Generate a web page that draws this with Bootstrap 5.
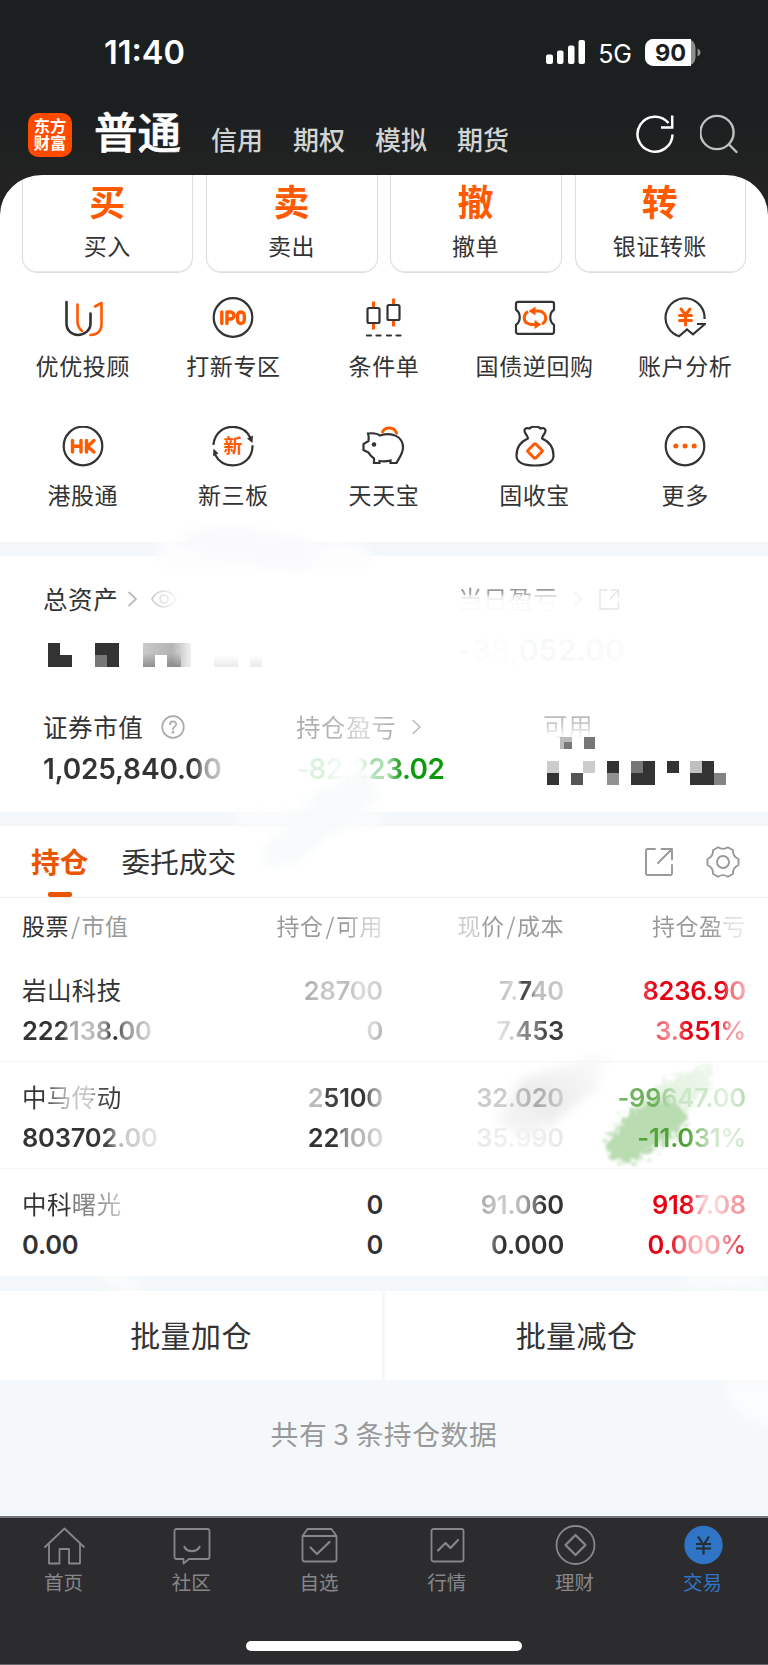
<!DOCTYPE html>
<html lang="zh-CN">
<head>
<meta charset="utf-8">
<meta name="viewport" content="width=device-width, initial-scale=1">
<title>交易</title>
<link href="https://cdn.jsdelivr.net/npm/bootstrap@5.3.0/dist/css/bootstrap.min.css" rel="stylesheet">
<style>
body{font-family:"Noto Sans CJK SC",sans-serif;color:#333;background:#f4f8fa;width:768px;overflow-x:hidden}
svg{display:block;flex:none;fill:none;stroke-linecap:round;stroke-linejoin:round}
.latin{font-family:Inter,"Noto Sans CJK SC",sans-serif}
.app-head{height:175px;background:linear-gradient(#1b1f20 60%,#222)}
.status{height:103px;padding:3px 67px 0 104px}
.clock{font-size:32.5px;font-weight:600;letter-spacing:0}
.net{font-size:25px;margin:3px 13px 0 12px}
.titlebar{height:46px;padding:0 29px 0 28px}
.logo{width:44px;height:44px;border-radius:10px;background:#ff4a00;font:700 16.3px/17.5px "Noto Sans CJK SC",sans-serif;padding-top:4px;margin-top:1px}
.title-main{font-size:43.5px;font-weight:500;line-height:46px;margin:-6px 0 0 22px;-webkit-text-stroke:.7px #fff}
.title-sub{font-size:26px;font-weight:500;line-height:30px;color:#d2d3d3;margin-left:30px;margin-top:10px}
.dark{background:#222}
.sheet{height:367px;border-radius:42px 42px 0 0 / 40px 40px 0 0;overflow:hidden}
.trade-row{display:grid;grid-template-columns:repeat(4,1fr);gap:12.7px;padding:0 22px}
.trade{height:98px;border:1.5px solid #dedede;border-top:0;border-radius:0 0 15px 15px;box-shadow:0 -1px 0 #e6e6e6 inset}
.trade b{font-size:36px;line-height:40px;color:#ff5a00;height:40px;margin:5px 1px 0 0;font-weight:700}
.trade span{font-size:23px;line-height:30px;margin:10px 1px 0 0;letter-spacing:.5px}
.quick{display:grid;grid-template-columns:repeat(5,150.6px);padding:24px 7.5px 0;row-gap:46px}
.quick span{font-size:23px;line-height:30px;margin:13px 0 0;letter-spacing:.6px;white-space:nowrap}
.k{stroke:#333;stroke-width:2.2}
.o{stroke:#ff5a00;stroke-width:3}
.o-bold{stroke-width:3.4}
.gap-band{height:14px;background:#f3f7f9}
.assets{height:256px;padding:28px 0 0 43px}
.lbl{font-size:24.5px;line-height:28px;height:30px;white-space:nowrap;letter-spacing:.6px}
.top-grid{display:grid;grid-template-columns:415px 1fr}
.low-grid{display:grid;grid-template-columns:253px 247px 1fr;margin-top:45px}
.money{font-size:28px;font-weight:560;line-height:36px;height:34px;margin-top:9px;letter-spacing:-.15px}
.tabs{height:72px;border-bottom:1.5px solid #f0f0f0;padding:0 28px 0 31px}
.tab{font-size:28.7px;line-height:70px;height:72px;position:relative}
.tab.on{color:#ea5504;font-weight:700;margin-right:33px}
.tab.on::after{content:"";position:absolute;left:17px;top:66px;width:24px;height:5px;border-radius:2px;background:#ea5504}
.line-grid{display:grid;grid-template-columns:200px 161px 181px 182px;padding:0 22px}
.heads{height:57px;line-height:55px;font-size:23px;color:#999;letter-spacing:.5px;white-space:nowrap}
.slash{margin:0 1px 0 2px}
.hold{height:107px;padding-top:16px;border-bottom:1.5px solid #f5f5f5;line-height:40px;font-size:25.5px;font-weight:560;letter-spacing:-.2px}
.hold .nm{font:400 24.5px/38px "Noto Sans CJK SC",sans-serif;height:40px;letter-spacing:.4px}
.hold:last-child{border-bottom-color:transparent}
.ink{display:inline-block;color:transparent;background-clip:text;-webkit-background-clip:text;background-image:var(--g)}
.g-total{--g:linear-gradient(90deg,#333 85%,#888 89%,#a8a8a8 92%,#ccc)}
.g-pl{--g:linear-gradient(90deg,#f0f9f0,#d8f0da 15%,#f4fbf4 28%,#fafdfa 42%,#a5dba9 52%,#b5e0b9 62%,#45b045 67%,#0a9a0a 72%)}
.g-lab{--g:linear-gradient(90deg,#aaa,#bbb 45%,#ddd 65%,#aaa)}
.g-day{--g:linear-gradient(180deg,#999 20%,#aaa 32%,#e8e8e8 42%,#fafafa 62%)}
.g-dayv{--g:linear-gradient(90deg,#fafafa,#fdfdfd 25%,#f4faf5 50%,#f9f9f9 60%,#f8f8f8 72%,#fbfbfb)}
.g-use{--g:linear-gradient(180deg,#bbb 20%,#d4d4d4 60%,#f1f1f1 80%)}
.g-h2{--g:linear-gradient(90deg,#999 65%,#aaa 70%,#ccc 82%,#ddd)}
.g-h3{--g:linear-gradient(90deg,#ccc,#ccc 18%,#999 28%)}
.g-h4{--g:linear-gradient(90deg,#999 60%,#aaa 74%,#ddd 80%,#e8e8e8)}
.g-m1{--g:linear-gradient(90deg,#333 28%,#444 32%,#999 36%,#c8c8c8 50%,#999 64%,#333 69%,#333 73%,#888 78%,#ddd)}
.g-q1{--g:linear-gradient(90deg,#aaa,#ccc 30%,#bbb 55%,#ddd 70%,#ccc)}
.g-z1{--g:linear-gradient(110deg,#d8d8d8 40%,#999)}
.g-p1{--g:linear-gradient(90deg,#bbb,#ddd 28%,#444 36%,#555 48%,#bbb 56%,#ccc)}
.g-c1{--g:linear-gradient(90deg,#e8e8e8,#ccc 26%,#888 40%,#777 60%,#333 78%,#444)}
.g-r1{--g:linear-gradient(90deg,#ee4550,#e60012 14%,#e60012 78%,#f06a73 84%,#f7b0b5)}
.g-r2{--g:linear-gradient(90deg,#f04b55,#f59098 16%,#f26a72 24%,#e60012 36%,#e60012 71%,#f48b93 80%,#f7b7bb)}
.g-n2{--g:linear-gradient(90deg,#333 22%,#666 29%,#bbb 46%,#ccc 68%,#555 75%,#333)}
.g-m2{--g:linear-gradient(90deg,#333 53%,#444 62%,#888 68%,#ccc 75%,#ccc 82%,#e8e8e8)}
.g-q2{--g:linear-gradient(90deg,#bbb 18%,#444 24%,#333 75%,#888 85%,#ccc)}
.g-z2{--g:linear-gradient(90deg,#333 38%,#666 45%,#aaa 55%,#bbb 75%,#ddd)}
.g-p2{--g:linear-gradient(90deg,#ccc,#ccc 40%,#aaa 70%,#d0d0d0)}
.g-c2{--g:linear-gradient(90deg,#e8e8e8,#f3f3f3 50%,#e8e8e8)}
.g-d2{--g:linear-gradient(90deg,#79b86b,#66ae55 30%,#a0cf97 36%,#cce7c7 48%,#cce7c7 70%,#e2f2df 85%,#b5dab0)}
.g-e2{--g:linear-gradient(90deg,#55a540,#4ba030 45%,#76b665 52%,#badbb3 64%,#e2f1df 80%,#cae4c6)}
.g-n3{--g:linear-gradient(90deg,#333 45%,#888 54%,#888 70%,#999 80%,#ccc)}
.g-p3{--g:linear-gradient(90deg,#aaa,#ccc 25%,#bbb 45%,#888 61%,#333 76%)}
.g-c3{--g:linear-gradient(100deg,#888,#333 20%)}
.g-r3{--g:linear-gradient(90deg,#e60012 38%,#ee6d78 46%,#f8c5c9 54%,#fbe0e2 66%,#f4adb2 80%,#f28c94)}
.g-s3{--g:linear-gradient(90deg,#e60012 23%,#f04c57 30%,#f9bdc1 48%,#f9bdc1 62%,#f29098 77%,#e51c2b)}
.smudge{position:absolute;pointer-events:none;overflow:visible}
.bulk{height:89px;line-height:86px;font-size:30px;letter-spacing:.4px;gap:3px;background:#f4f8fa}
.count{height:136px;line-height:106px;font-size:27.8px;color:#999;background:#f4f8fa;letter-spacing:.6px}
.num{margin:0 6px 0 6px}
.botnav{height:149px;background:#2c2c2e;border-top:2px solid #77777a;border-bottom:1px solid #66666a;color:#87878b}
.botnav .items{display:grid;grid-template-columns:repeat(6,127.8px);padding-top:7px}
.botnav span{font-size:19.5px;line-height:28px;margin:1px 1px 0 0}
.botnav svg{stroke:currentColor;stroke-width:1.8}
.botnav .cur{color:#3075c5}
.homebar{width:276px;height:10px;border-radius:5px;background:#fff;margin:45px auto 0}
</style>
<script src="https://cdn.jsdelivr.net/npm/bootstrap@5.3.0/dist/js/bootstrap.bundle.min.js"></script>
</head>
<body>
<header class="app-head text-white">
  <div class="status d-flex align-items-center latin">
    <span class="clock">11:40</span>
    <svg class="ms-auto" width="40" height="26" viewBox="0 0 40 26"><g fill="#fff"><rect x="0" y="14.500" width="7" height="9.500" rx="2"/><rect x="11" y="10.500" width="6.500" height="13.500" rx="2"/><rect x="22" y="5.500" width="6.500" height="18.500" rx="2"/><rect x="32.500" y="0" width="6.500" height="24" rx="2"/></g></svg>
    <span class="net">5G</span>
    <svg width="56" height="28" viewBox="0 0 56 28"><rect width="50.500" height="27" rx="8.500" fill="#8d8f8f"/><path d="M8.500 0H46v27H8.500A8.500 8.500 0 0 1 0 18.500v-10A8.500 8.500 0 0 1 8.500 0z" fill="#fff"/><path d="M52.500 9.500c4 1.500 4 6.500 0 8z" fill="#8d8f8f"/><text x="25.500" y="22" text-anchor="middle" font-family="Inter" font-size="23.500" font-weight="700" fill="#1b1f20">90</text></svg>
  </div>
  <div class="titlebar d-flex align-items-center mt-2">
    <div class="logo text-center">东方<br>财富</div>
    <div class="title-main">普通</div>
    <div class="title-sub">信用</div><div class="title-sub">期权</div><div class="title-sub">模拟</div><div class="title-sub">期货</div>
    <svg class="ms-auto" width="40" height="40" viewBox="0 0 40 40" stroke="#fff" stroke-width="2.500"><path stroke-linecap="butt" stroke-linejoin="miter" d="M36.500 20.500A17.500 17.500 0 1 1 32.500 9M36.200 1.500v12H25"/></svg>
    <svg class="ms-4" width="39" height="40" viewBox="0 0 39 40" stroke="#bfc0c0" stroke-width="2.400"><circle cx="17" cy="18.500" r="16.600"/><path d="M29 30.500l7.500 7.500"/></svg>
  </div>
</header>
<div class="dark">
<section class="sheet bg-white">
  <div class="trade-row text-center">
    <div class="trade d-flex flex-column"><b>买</b><span>买入</span></div>
    <div class="trade d-flex flex-column"><b>卖</b><span>卖出</span></div>
    <div class="trade d-flex flex-column"><b>撤</b><span>撤单</span></div>
    <div class="trade d-flex flex-column"><b>转</b><span>银证转账</span></div>
  </div>
  <div class="quick">
    <div class="d-flex flex-column align-items-center">
      <svg width="42" height="40" viewBox="0 0 42 40"><g stroke-width="2.600"><path stroke="#333" d="M4.500 5v21.500c0 7 5.500 11.500 11.500 11.500s12.500-4.500 12.500-11.500V16.500"/><path stroke="#ff5a00" d="M15.500 7.500v17c0 4 1.500 7 4.500 9.500M33 9.500l6.500-3.500v21c0 7-4.500 11-11 11"/></g></svg><span>优优投顾</span></div>
    <div class="d-flex flex-column align-items-center">
      <svg width="42" height="42" viewBox="0 0 42 42" style="margin-bottom:-2px"><circle class="k" cx="21" cy="20.500" r="19.300"/><path class="o o-bold" d="M9.800 15v11.500M15 26.500V15h3.500a3.400 3.400 0 0 1 0 7H15"/><rect class="o o-bold" x="25.500" y="15" width="6.800" height="11.500" rx="3.400"/></svg><span>打新专区</span></div>
    <div class="d-flex flex-column align-items-center">
      <svg width="42" height="42" viewBox="0 0 42 42" style="margin-bottom:-2px"><path class="o" stroke-linecap="butt" d="M10.500 4.500v7M10.500 26v6.500M30.500 1.500v7M30.500 23v6.500"/><rect class="k" x="4.500" y="11" width="12" height="15" rx="1.500"/><rect class="k" x="24.500" y="8" width="12" height="15" rx="1.500"/><path class="k" d="M4 38.500h4M13.500 38.500h4M24 38.500h4M33.500 38.500h4"/></svg><span>条件单</span></div>
    <div class="d-flex flex-column align-items-center">
      <svg width="42" height="40" viewBox="0 0 42 40"><path class="k" d="M4 4.800h34a2 2 0 0 1 2 2v6c-5 3-5 12 0 15v7a2 2 0 0 1-2 2H4a2 2 0 0 1-2-2v-7c5-3 5-12 0-15v-6a2 2 0 0 1 2-2z"/><path class="o" stroke-linecap="butt" d="M13 26.500C8.500 22.500 10 17 14 14.500M29 15.500C33.500 19.500 32 25 28 27M20 14h5c2 .3 3.500 1 4.500 2M22 27.500h-5c-2-.3-3.500-1-4.500-2"/><path fill="#ff5a00" d="M21.500 9.500v9L14.500 14zM20.500 23v9l7-4.500z"/></svg><span>国债逆回购</span></div>
    <div class="d-flex flex-column align-items-center">
      <svg width="42" height="42" viewBox="0 0 42 42" style="margin-bottom:-2px"><path class="k" stroke-linecap="butt" stroke-linejoin="miter" d="M40.500 22A19.500 19.500 0 1 0 15 39.300l8-6.800 6 4.800 12-10.300h-8"/><path class="o" d="M17 12l4.500 6 4.500-6M15.500 18.500h12M15.500 23.500h12M21.500 18.500v9.500"/></svg><span>账户分析</span></div>
    <div class="d-flex flex-column align-items-center">
      <svg width="42" height="42" viewBox="0 0 42 42" style="margin-bottom:-2px"><circle class="k" cx="21" cy="20" r="19.300"/><path class="o o-bold" d="M10.500 14.500v11.500M19 14.500v11.500M10.500 20.300H19M24.500 14.500v11.500M32 14.500l-6.500 6 6.500 5.500"/></svg><span>港股通</span></div>
    <div class="d-flex flex-column align-items-center">
      <svg width="42" height="42" viewBox="0 0 42 42" style="margin-bottom:-2px"><path class="k" d="M1.500 18C3 7 11 .900 21 .900c8 0 14 4 17.500 11M40.500 20c0 11-8 19.400-19.500 19.400C12.500 39.400 6.500 35.500 3 28.500"/><path fill="#333" d="M35 12.500l6-3-.5 7.500zM1 30l.5-7.500 5 5z"/><text x="21" y="27" text-anchor="middle" font-size="19" font-weight="700" fill="#ff5a00">新</text></svg><span>新三板</span></div>
    <div class="d-flex flex-column align-items-center">
      <svg width="44" height="42" viewBox="1 0 44 42" style="margin-bottom:-2px"><path class="k" stroke-linejoin="miter" d="M7 7.500c4-.5 9-.5 12 2 12-4 23 1 23 12 0 6-3.500 10-6.500 15.500h-6v-2.500c-4 1-8 1-11 .5v2H13v-4.500C9.500 30 8.500 28.500 7.500 26.500L2.500 24v-6l5-3c.5-2.500.5-4.500-.5-7.500z"/><circle cx="13" cy="18.500" r="2.300" fill="#333"/><path class="o" d="M21.500 6C24 .5 33 .5 35.500 7"/></svg><span>天天宝</span></div>
    <div class="d-flex flex-column align-items-center">
      <svg width="42" height="42" viewBox="0 0 42 42" style="margin-bottom:-2px"><path class="k" d="M14 12.500C6 16 2.500 22.500 2.500 29.500c0 7.500 6.500 10 18.500 10s18.500-2.500 18.500-10c0-7-3.500-13.500-11.500-17 0-3 4-5 3.500-8.500-1-2.500-4-2-5-1.500-2-2.500-9-2.500-11 0-1-.5-4-1-5 1.500-.5 3.500 3.500 5.500 3.500 8.500z"/><rect class="o" x="15.500" y="19.500" width="11" height="11" rx="1.500" transform="rotate(45 21 25)"/></svg><span>固收宝</span></div>
    <div class="d-flex flex-column align-items-center">
      <svg width="42" height="42" viewBox="0 0 42 42" style="margin-bottom:-2px"><circle class="k" cx="21" cy="20" r="19.300"/><g fill="#ff5a00"><circle cx="11.800" cy="20" r="2.500"/><circle cx="21" cy="20" r="2.500"/><circle cx="30.200" cy="20" r="2.500"/></g></svg><span>更多</span></div>
  </div>
</section>
</div>
<div class="position-relative">
  <div class="gap-band"></div>
  <svg class="smudge" style="left:130px;top:-20px" width="250" height="70" viewBox="0 0 250 70"><defs><filter id="soft" x="-20%" y="-60%" width="140%" height="220%"><feTurbulence type="fractalNoise" baseFrequency=".12" numOctaves="2" result="n"/><feDisplacementMap in="SourceGraphic" in2="n" scale="16"/><feGaussianBlur stdDeviation="5"/></filter></defs><path filter="url(#soft)" fill="#fdfdfe" d="M30 20h190l20 8v20H30z"/><path filter="url(#soft)" fill="#fafafd" d="M50 10l60-5 60 10 20 18-20 16-40-8-60-8z"/></svg>
</div>
<section class="assets bg-white">
  <div class="top-grid">
    <div>
      <div class="lbl d-flex align-items-center">总资产
        <svg style="margin-left:10px" width="10" height="16" viewBox="0 0 10 16" stroke="#bbb" stroke-width="1.800"><path d="M1 1.500l7 6.500-7 6.500"/></svg>
        <svg style="margin-left:13px" width="26" height="18" viewBox="0 0 26 18" stroke="url(#eye)" stroke-width="1.600"><defs><linearGradient id="eye" gradientUnits="userSpaceOnUse" x1="0" y1="0" x2="26" y2="0"><stop stop-color="#ccc"/><stop offset="1" stop-color="#f8f8f8"/></linearGradient></defs><path d="M1 9C7-1.500 19-1.500 25 9M1 9c6 10.500 18 10.500 24 0"/><circle cx="13" cy="9" r="4"/></svg></div>
      <svg style="margin:29px 0 0 5px" width="216" height="24" viewBox="0 0 216 24" shape-rendering="crispEdges">
        <defs><linearGradient id="m1"><stop stop-color="#c9c9c9"/><stop offset=".6" stop-color="#b4b4b4"/><stop offset="1" stop-color="#f2f2f2"/></linearGradient><linearGradient id="m2" x1="0" y1="0" x2="0" y2="1"><stop stop-color="#fff"/><stop offset="1" stop-color="#ddd"/></linearGradient>
        <linearGradient id="m3" x1="0" y1="0" x2="0" y2="1"><stop stop-color="#777" stop-opacity="0"/><stop offset="1" stop-color="#777" stop-opacity=".7"/></linearGradient></defs>
        <path fill="#333" d="M0 0h12v12h12v12H0zM47 0h24v24H59V12H47z"/><path fill="#777" d="M47 12h12v12H47z"/>
        <path fill="url(#m1)" d="M95 0h48v24h-24V12h-12v12H95z"/><path fill="url(#m3)" d="M95 10h12v14H95zM119 10h14v14h-14z"/>
        <path fill="url(#m2)" d="M166 12h24v12h-24zM202 12h12v12h-12z" opacity=".6"/></svg>
    </div>
    <div>
      <div class="lbl d-flex align-items-center"><span class="ink g-day">当日盈亏</span>
        <svg style="margin-left:16px" width="10" height="16" viewBox="0 0 10 16" stroke="#f4f4f4" stroke-width="1.600"><path d="M1 1.500l6 6.500-6 6.500"/></svg>
        <svg style="margin-left:15px" width="21" height="21" viewBox="0 0 21 21" stroke="#e6e6e6" stroke-width="1.400"><path d="M8 1H1v19h18.500v-7M12 1h7.500v7M19 1.500L11 10"/></svg></div>
      <div class="latin money ink g-dayv" style="margin-top:18px;font-size:30.500px">-38,052.00</div>
    </div>
  </div>
  <div class="low-grid">
    <div><div class="lbl d-flex align-items-center">证券市值
      <svg style="margin-left:18px" width="24" height="24" viewBox="0 0 24 24" stroke="#aaa" stroke-width="1.700"><circle cx="12" cy="12" r="10.800"/><path d="M9 9.500c0-4 6.200-4 6.200-.3 0 2.300-3.200 2.500-3.200 5"/><circle cx="12" cy="17.300" r=".6"/></svg></div>
      <div class="latin money"><span class="ink g-total">1,025,840.00</span></div></div>
    <div><div class="lbl d-flex align-items-center"><span class="ink g-lab">持仓盈亏</span>
      <svg style="margin-left:16px" width="10" height="16" viewBox="0 0 10 16" stroke="#bbb" stroke-width="1.600"><path d="M1 1.500l7 6.500-7 6.500"/></svg></div>
      <div class="latin money" style="letter-spacing:-.5px"><span class="ink g-pl">-82,223.02</span></div></div>
    <div><div class="lbl" style="height:25px;line-height:27px"><span class="ink g-use">可用</span></div>
      <svg style="margin-left:4px" width="180" height="48" viewBox="0 0 180 48" shape-rendering="crispEdges">
        <path fill="#bbb" d="M13 0h12v12H13z"/><path fill="#777" d="M17 5h8v7h-8zM37 0h11v12H37z"/>
        <path fill="#ccc" d="M0 24h12v12H0zM36 24h12v12H36z"/><path fill="#c0c0c0" d="M143 24h12v12h-12z"/>
        <path fill="#333" d="M0 36h12v12H0zM60 24h12v12H60zM96 24h12v24H84V36h12zM120 24h12v12h-12zM155 24h12v24h-24V36h12z"/>
        <path fill="#555" d="M24 36h12v12H24z"/><path fill="#919191" d="M60 36h12v12H60z"/><path fill="#777" d="M84 24h12v12H84z"/><path fill="#838383" d="M167 36h12v12h-12z"/></svg></div>
  </div>
</section>
<div class="position-relative"><div class="gap-band"></div>
  <svg class="smudge" style="left:220px;top:-45px" width="180" height="110" viewBox="0 0 180 110"><path filter="url(#soft)" fill="#fbfcfd" d="M15 44h145v16H15z"/><path filter="url(#soft)" fill="#f7fafb" d="M42 84L98 26l48-24 14 28-50 40-38 28-28 2z"/></svg>
</div>
<section class="bg-white">
  <div class="tabs d-flex align-items-center">
    <div class="tab on">持仓</div><div class="tab">委托成交</div>
    <svg class="ms-auto" width="30" height="30" viewBox="0 0 30 30" stroke="#999" stroke-width="1.900"><path d="M11 2H3.500A1.500 1.500 0 0 0 2 3.500v23A1.500 1.500 0 0 0 3.500 28h23a1.500 1.500 0 0 0 1.500-1.500V18M17.500 2H28v10.500M27.500 2.500L14 16"/></svg>
    <svg style="margin-left:32px" width="34" height="32" viewBox="0 0 34 32" stroke="#999" stroke-width="1.900"><path d="M12 1.200c3.500 2.300 6.500 2.300 10 0l5 3c-.3 4 1.500 7 5.500 8.800v6c-4 1.800-5.800 4.800-5.500 8.800l-5 3c-3.500-2.300-6.500-2.300-10 0l-5-3c.3-4-1.500-7-5.500-8.800v-6C5.500 11.200 7.300 8.200 7 4.200z"/><circle cx="17" cy="16" r="6"/></svg>
  </div>
  <div class="line-grid heads">
    <div><span style="color:#333">股票</span><span class="slash">/</span>市值</div>
    <div class="text-end"><span class="ink g-h2">持仓<span class="slash">/</span>可用</span></div>
    <div class="text-end"><span class="ink g-h3">现价<span class="slash">/</span>成本</span></div>
    <div class="text-end"><span class="ink g-h4">持仓盈亏</span></div>
  </div>
  <div class="position-relative">
    <svg class="smudge" style="left:480px;top:90px" width="288" height="130" viewBox="0 0 288 130">
      <defs><filter id="brush" x="-20%" y="-20%" width="140%" height="140%"><feTurbulence type="fractalNoise" baseFrequency=".22" numOctaves="3" result="n"/><feDisplacementMap in="SourceGraphic" in2="n" scale="20"/><feGaussianBlur stdDeviation="1.800"/></filter>
      <filter id="haze" x="-20%" y="-20%" width="140%" height="140%"><feTurbulence type="fractalNoise" baseFrequency=".2" numOctaves="2" result="n"/><feDisplacementMap in="SourceGraphic" in2="n" scale="20"/><feGaussianBlur stdDeviation="5"/></filter>
      <linearGradient id="gry" x1="0" y1="1" x2="1" y2="0"><stop stop-color="#fafafa"/><stop offset=".4" stop-color="#ececec"/><stop offset="1" stop-color="#fefefe"/></linearGradient>
      <linearGradient id="grn" x1="0" y1="1" x2="1" y2="0"><stop stop-color="#d5ebd0"/><stop offset="1" stop-color="#eff8ed"/></linearGradient></defs>
      <path filter="url(#haze)" fill="url(#gry)" d="M15 74L42 36l50-18 44-14-26 46-54 38-20 4z"/>
      <path filter="url(#brush)" fill="url(#grn)" d="M155 62l34-28 30-12 18-4-8 24-24 26-30 20-34 10z"/>
      <path filter="url(#brush)" fill="#b9dcb1" d="M126 97l18-26 32-18 20 4 12 16-10 16-22 14-24 16-22-4z"/></svg>
    <div class="line-grid hold latin position-relative">
      <div><div class="nm">岩山科技</div><span class="ink g-m1">222138.00</span></div>
      <div class="text-end"><span class="ink g-q1">28700</span><br><span class="ink g-z1">0</span></div>
      <div class="text-end"><span class="ink g-p1">7.740</span><br><span class="ink g-c1">7.453</span></div>
      <div class="text-end"><span class="ink g-r1">8236.90</span><br><span class="ink g-r2">3.851%</span></div>
    </div>
    <div class="line-grid hold latin position-relative">
      <div><div class="nm"><span class="ink g-n2">中马传动</span></div><span class="ink g-m2">803702.00</span></div>
      <div class="text-end"><span class="ink g-q2">25100</span><br><span class="ink g-z2">22100</span></div>
      <div class="text-end"><span class="ink g-p2">32.020</span><br><span class="ink g-c2">35.990</span></div>
      <div class="text-end"><span class="ink g-d2">-99647.00</span><br><span class="ink g-e2">-11.031%</span></div>
    </div>
    <div class="line-grid hold latin position-relative">
      <div><div class="nm"><span class="ink g-n3">中科曙光</span></div>0.00</div>
      <div class="text-end">0<br>0</div>
      <div class="text-end"><span class="ink g-p3">91.060</span><br><span class="ink g-c3">0.000</span></div>
      <div class="text-end"><span class="ink g-r3">9187.08</span><br><span class="ink g-s3">0.000%</span></div>
    </div>
  </div>
</section>
<div class="gap-band position-relative overflow-hidden" style="height:15px"><svg class="smudge" style="left:90px;top:0" width="678" height="15"><g filter="url(#soft)" fill="#fafcfd"><path d="M10 0h38v13H22zM590 0h88v12h-80z"/></g></svg></div>
<div class="bulk d-flex text-center"><div class="bg-white" style="width:382px">批量加仓</div><div class="bg-white flex-fill">批量减仓</div></div>
<div class="count text-center position-relative overflow-hidden">共有<span class="num">3</span>条持仓数据
  <svg class="smudge" style="right:0;top:0" width="50" height="60" viewBox="0 0 50 60"><path filter="url(#soft)" fill="#fbfcfd" d="M4 0h54v50L20 36z"/></svg></div>
<nav class="botnav">
  <div class="items">
    <div class="d-flex flex-column align-items-center"><svg width="42" height="42" viewBox="0 0 42 42"><path d="M2 22L21.500 3.500 41 22M6 19v19.500h10.500V24h9.500v14.500h11V19"/></svg><span>首页</span></div>
    <div class="d-flex flex-column align-items-center"><svg width="42" height="42" viewBox="0 0 42 42"><path d="M5.500 4h31a2 2 0 0 1 2 2v26a2 2 0 0 1-2 2H18L12.500 38.500V34h-7a2 2 0 0 1-2-2V6a2 2 0 0 1 2-2z"/><path stroke-width="2.200" d="M13.500 22c2.500 5.500 12 5.500 15 0"/></svg><span>社区</span></div>
    <div class="d-flex flex-column align-items-center"><svg width="42" height="42" viewBox="0 0 42 42"><path d="M4.500 11l5-7h24l5 7v23.500a2 2 0 0 1-2 2h-30a2 2 0 0 1-2-2zM4.500 11h34"/><path stroke-width="2.200" d="M12.500 22.500l6.500 6.500L31.500 17"/></svg><span>自选</span></div>
    <div class="d-flex flex-column align-items-center"><svg width="42" height="42" viewBox="0 0 42 42"><rect x="5.500" y="4" width="32" height="32.500" rx="2"/><path stroke-width="2.200" d="M12 25.500l7.500-7.500 5 5 7.500-8"/></svg><span>行情</span></div>
    <div class="d-flex flex-column align-items-center"><svg width="42" height="42" viewBox="0 0 42 42"><circle cx="21.500" cy="20" r="19"/><path stroke-width="2.200" d="M21.500 10l10 10-10 10-10-10z"/></svg><span>理财</span></div>
    <div class="cur d-flex flex-column align-items-center"><svg width="42" height="42" viewBox="0 0 42 42"><circle cx="21.500" cy="20" r="18.300" fill="#3075c5"/><path stroke="#252c36" stroke-width="2.200" stroke-linecap="butt" d="M16 11.500l5.500 8.500 5.500-8.500M14 19h15M14 23.500h15M21.500 19v10.500"/></svg><span>交易</span></div>
  </div>
  <div class="homebar"></div>
</nav>
</body>
</html>
